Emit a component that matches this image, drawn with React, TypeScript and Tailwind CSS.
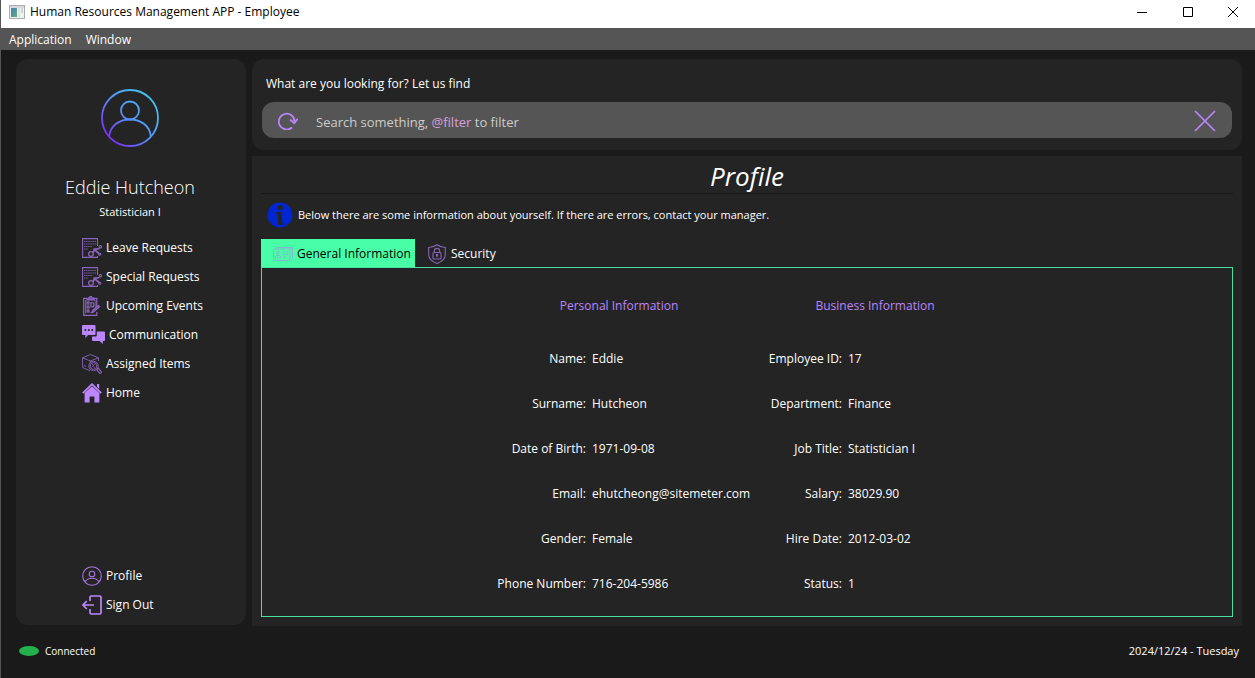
import React, { useState } from "react";

type IconProps = { className?: string };

function AppIcon() {
  return (
    <svg viewBox="0 0 16 14" className="h-3.5 w-4" aria-hidden="true">
      <defs>
        <linearGradient id="win" x1="0" y1="0" x2="1" y2="1">
          <stop offset="0" stopColor="#4a7fb0" />
          <stop offset="1" stopColor="#5fae7c" />
        </linearGradient>
      </defs>
      <rect x="0.5" y="0.5" width="15" height="13" fill="#f1f1f1" stroke="#a9adb2" />
      <rect x="1" y="1" width="14" height="2" fill="#d5d8dc" />
      <rect x="2" y="3" width="6" height="9" fill="url(#win)" />
      <rect x="9" y="3" width="2" height="9" fill="#dfe3e0" />
      <rect x="12" y="3" width="2" height="5" fill="#c9d8cf" />
    </svg>
  );
}

function Avatar() {
  return (
    <svg viewBox="0 0 58 58" className="size-[58px]" fill="none" stroke="url(#avatar)" strokeWidth="1.8" aria-hidden="true">
      <defs>
        <linearGradient id="avatar" gradientUnits="userSpaceOnUse" x1="8" y1="50" x2="50" y2="8">
          <stop offset="0" stopColor="#7b2ff7" />
          <stop offset="0.5" stopColor="#5495f8" />
          <stop offset="1" stopColor="#44c4f0" />
        </linearGradient>
      </defs>
      <circle cx="29" cy="29" r="28" />
      <circle cx="29" cy="21.5" r="9" />
      <path d="M8.200 47.500C9 37 18 30.500 29 30.500S49 37 49.800 47.500" />
    </svg>
  );
}

function RequestIcon({ className }: IconProps) {
  return (
    <svg viewBox="0 0 20 20" className={className} fill="none" stroke="#8a63bb" strokeWidth="1.100" aria-hidden="true">
      <path d="M15.500 8V.6H.6v18.800h14.900V18" />
      <path d="M2 3.500h12M2 6h12M2 8.500h8M2 11h4" strokeDasharray="1.500 .6" strokeWidth=".8" />
      <circle cx="9" cy="16" r="2.300" strokeWidth="1.300" />
      <path d="M10.700 14.300l3-3.200 4-.6M11.500 10.500l6 5.500" strokeWidth="1.700" />
      <circle cx="18.300" cy="8.700" r="1.200" />
      <circle cx="17.800" cy="16.200" r="1" />
    </svg>
  );
}

function EventsIcon({ className }: IconProps) {
  return (
    <svg viewBox="0 0 20 20" className={className} fill="none" stroke="#8e65c1" strokeWidth="1.200" aria-hidden="true">
      <path d="M14.800 16V19.300H1.700V2.300h4M11 2.300h3.800V11" />
      <path d="M3.500 17.500V4.200h9.700V12" strokeWidth=".8" />
      <path d="M5.500 3.500l1-1.700h1L8 .7h1.500l.5 1.100h1l1 1.700z" fill="#6a4a90" />
      <rect x="5" y="6" width="2" height="2" />
      <rect x="5" y="10" width="2" height="2" />
      <rect x="5" y="14" width="2" height="2" />
      <path d="M9 6.500h1c2.500 0 2.500 4.500 0 4.500H9zM8.500 16.500h3" />
      <path d="M10.500 14.500l6-5 1.200 1.300-6 5-1.700.5z" fill="#6a4a90" />
    </svg>
  );
}

function ChatIcon({ className }: IconProps) {
  return (
    <svg viewBox="0 0 23 19" className={className} fill="#bb86fc" aria-hidden="true">
      <path d="M1 0h11.500a1 1 0 0 1 1 1v8a1 1 0 0 1-1 1H6l-2.700 3v-3H1a1 1 0 0 1-1-1V1a1 1 0 0 1 1-1z" />
      <path d="M14.800 6.500H22a1 1 0 0 1 1 1V15a1 1 0 0 1-1 1h-1.200v3l-3.300-3H11a1 1 0 0 1-1-1v-3.500h3.800a1 1 0 0 0 1-1z" />
      <g fill="#242424">
        <circle cx="3.400" cy="5" r="1" />
        <circle cx="6.800" cy="5" r="1" />
        <circle cx="10.200" cy="5" r="1" />
      </g>
    </svg>
  );
}

function ItemsIcon({ className }: IconProps) {
  return (
    <svg viewBox="0 0 20 20" className={className} fill="none" stroke="#8a63bb" strokeWidth=".9" aria-hidden="true">
      <path d="M8 16.800L.6 13.500V3.800L8.500.5l8 3.300V7M.6 3.800L8.300 7l8.200-3.200M8.300 7v2M2 11.500l2 .9" />
      <circle cx="11.500" cy="12" r="4.700" />
      <circle cx="11.500" cy="12" r="3.400" />
      <path d="M10 9.500l3 5M13.500 9.500l-4 4" strokeWidth=".7" />
      <path d="M15 15.200l1.200-1.100 3.400 4-1.500 1.500-3.400-3.700" strokeWidth="1.200" />
    </svg>
  );
}

function HomeIcon({ className }: IconProps) {
  return (
    <svg viewBox="0 0 20 20" className={className} aria-hidden="true">
      <path d="M10 3.300l7.400 6.800v9.400h-5v-6H7.600v6h-5v-9.400z" fill="#bb86fc" />
      <path d="M15 1h2.200v5L15 4z" fill="#bb86fc" />
      <path d="M.8 10.200L10 1.200l9.200 9" fill="none" stroke="#bb86fc" strokeWidth="1.800" />
    </svg>
  );
}

function ProfileIcon({ className }: IconProps) {
  return (
    <svg viewBox="0 0 20 20" className={className} fill="none" stroke="#a878e2" strokeWidth="1.100" aria-hidden="true">
      <circle cx="10" cy="10" r="9.300" />
      <circle cx="10" cy="8" r="2.800" />
      <path d="M3.200 15.700C4.500 13.200 7 12.200 10 12.200s5.500 1 6.800 3.500" />
    </svg>
  );
}

function SignOutIcon({ className }: IconProps) {
  return (
    <svg viewBox="0 0 20 20" className={className} fill="none" stroke="#bb86fc" strokeWidth="1.700" aria-hidden="true">
      <path d="M8 6V2.300c0-.8.500-1.300 1.300-1.300h8.400c.8 0 1.300.5 1.300 1.300v15.400c0 .8-.5 1.300-1.300 1.300H9.300c-.8 0-1.300-.5-1.300-1.300V14M12 10H1M4.800 6L1 10l3.800 4" />
    </svg>
  );
}

function ReloadIcon() {
  return (
    <svg viewBox="0 0 20 18" className="h-[18px] w-5" fill="none" stroke="#bb86fc" strokeWidth="1.800" aria-hidden="true">
      <path d="M14 15.500A7.900 7.900 0 1 1 16.600 9.500" />
      <path d="M12 7.500l4.300 3.600 3.400-4.300" />
    </svg>
  );
}

function InfoIcon() {
  return (
    <svg viewBox="0 0 26 26" className="size-[26px]" aria-hidden="true">
      <circle cx="13" cy="13" r="12.500" fill="#0026d2" />
      <circle cx="13.300" cy="5.500" r="2.500" fill="#242424" />
      <path d="M9 10.300l6-.6v10.800c0 .8.600 1 1.500.8v1.200c-1.500.8-5.500 1.200-5.500-1.300V11.800L9 11.500z" fill="#242424" />
    </svg>
  );
}

function IdCardIcon() {
  return (
    <svg viewBox="0 0 20 14" className="h-3.5 w-5" fill="none" stroke="#80b8d0" strokeWidth="1" aria-hidden="true">
      <rect x=".5" y="2" width="16.500" height="11.500" rx="1" />
      <path d="M2 1.700L3 .5h16.500v10.800L18 12.500M17 2l2.500-1.500" />
      <circle cx="5" cy="5.600" r="1.400" />
      <path d="M2.500 11V9.500c0-1.600 5-1.600 5 0V11zM9.500 5h3M13.500 5h2M9.500 7.500h5.500M9.500 10h4" />
    </svg>
  );
}

function ShieldIcon() {
  return (
    <svg viewBox="0 0 18 20" className="h-5 w-[18px]" fill="none" stroke="#8a63bb" strokeWidth="1.100" aria-hidden="true">
      <path d="M9 .7c2.500 2 5 2.600 8.300 2.800v7c0 4.500-4 7.500-8.300 8.900C4.700 18 .7 15 .7 10.500v-7C4 3.300 6.500 2.700 9 .7z" />
      <rect x="5" y="8.500" width="8" height="6.500" rx="1" />
      <path d="M6.300 8.500V7c0-3.500 5.400-3.500 5.400 0v1.500M9 11v2.200" />
      <circle cx="9" cy="11" r=".7" />
    </svg>
  );
}

const navItems = [
  { label: "Leave Requests", icon: <RequestIcon className="size-5" /> },
  { label: "Special Requests", icon: <RequestIcon className="size-5" /> },
  { label: "Upcoming Events", icon: <EventsIcon className="size-5" /> },
  { label: "Communication", icon: <ChatIcon className="h-[19px] w-[23px]" /> },
  { label: "Assigned Items", icon: <ItemsIcon className="size-5" /> },
  { label: "Home", icon: <HomeIcon className="size-5" /> },
];

const accountItems = [
  { label: "Profile", icon: <ProfileIcon className="size-5" /> },
  { label: "Sign Out", icon: <SignOutIcon className="size-5" /> },
];

const personal: [string, string][] = [
  ["Name:", "Eddie"],
  ["Surname:", "Hutcheon"],
  ["Date of Birth:", "1971-09-08"],
  ["Email:", "ehutcheong@sitemeter.com"],
  ["Gender:", "Female"],
  ["Phone Number:", "716-204-5986"],
];

const business: [string, string][] = [
  ["Employee ID:", "17"],
  ["Department:", "Finance"],
  ["Job Title:", "Statistician I"],
  ["Salary:", "38029.90"],
  ["Hire Date:", "2012-03-02"],
  ["Status:", "1"],
];

function NavList({ items }: { items: { label: string; icon: React.ReactNode }[] }) {
  return (
    <ul className="flex flex-col pl-[66px]">
      {items.map((item) => (
        <li key={item.label}>
          <button type="button" className="flex h-[29px] items-center gap-1 whitespace-nowrap">
            {item.icon}
            {item.label}
          </button>
        </li>
      ))}
    </ul>
  );
}

function InfoTable({ title, rows }: { title: string; rows: [string, string][] }) {
  return (
    <table className="w-[252px] table-fixed border-collapse">
      <caption className="h-[60px] pt-[22px] text-[#bb86fc]">{title}</caption>
      <tbody>
        {rows.map(([label, value]) => (
          <tr key={label} className="h-[45px]">
            <th scope="row" className="w-[93px] p-0 text-right font-normal whitespace-nowrap">
              {label}
            </th>
            <td className="p-0 pl-1.5 whitespace-nowrap">{value}</td>
          </tr>
        ))}
      </tbody>
    </table>
  );
}

export default function App() {
  const [query, setQuery] = useState("");
  const [tab, setTab] = useState("general");

  return (
    <div className="flex min-h-screen flex-col border-l border-[#555555] bg-[#1a1a1a] font-['Open_Sans','Noto_Sans',sans-serif] text-[12px] leading-4 text-white">
      <header className="flex h-7 items-center bg-white pl-2 text-black">
        <div className="flex flex-1 items-center gap-[5px] pb-1">
          <AppIcon />
          <h1>Human Resources Management APP - Employee</h1>
        </div>
        <div className="flex h-full pb-1">
          <button type="button" aria-label="Minimize" className="flex w-[46px] items-center justify-center">
            <svg viewBox="0 0 10 10" className="size-2.5" stroke="#000"><path d="M0 5.500h10" /></svg>
          </button>
          <button type="button" aria-label="Maximize" className="flex w-[46px] items-center justify-center">
            <svg viewBox="0 0 10 10" className="size-2.5" stroke="#000" fill="none"><path d="M.5.5h9v9h-9z" /></svg>
          </button>
          <button type="button" aria-label="Close" className="flex w-[44px] items-center justify-center">
            <svg viewBox="0 0 10 10" className="size-2.5" stroke="#000"><path d="M0 0l10 10M10 0L0 10" /></svg>
          </button>
        </div>
      </header>

      <nav className="flex h-[22px] items-center gap-3.5 bg-[#555555] px-2 pt-0.5">
        <button type="button">Application</button>
        <button type="button">Window</button>
      </nav>

      <div className="flex flex-1 gap-1.5 pt-[9px] pr-[13px] pl-[15px]">
        <aside className="mb-px flex w-[230px] shrink-0 flex-col rounded-xl bg-[#242424] pt-[30px] pb-1.5">
          <div className="flex flex-col items-center pr-0.5">
            <Avatar />
            <h2 className="mt-[26px] text-[18px] leading-7 font-light">Eddie Hutcheon</h2>
            <p className="mt-[3px] text-[11px]">Statistician I</p>
          </div>
          <div className="mt-[13px] flex flex-1 flex-col justify-between">
            <NavList items={navItems} />
            <NavList items={accountItems} />
          </div>
        </aside>

        <div className="flex min-w-0 flex-1 flex-col gap-1.5">
          <section className="rounded-xl bg-[#242424] px-2.5 pt-[17px] pb-3">
            <label htmlFor="search" className="block px-1 pb-2.5">What are you looking for? Let us find</label>
            <div className="flex h-9 items-center rounded-xl bg-[#555555] px-4 pt-0.5">
              <button type="button" aria-label="Reload"><ReloadIcon /></button>
              <div className="relative ml-[18px] flex-1 pt-0.5 text-[13px] leading-5">
                <input
                  id="search"
                  type="text"
                  value={query}
                  onChange={(e) => setQuery(e.target.value)}
                  className="block w-full bg-transparent text-white outline-none"
                />
                {query === "" && (
                  <span className="pointer-events-none absolute top-0.5 left-0 whitespace-nowrap text-[#cccccc]">
                    Search something, <span className="text-[#d9a0dc]">@filter</span> to filter
                  </span>
                )}
              </div>
              <button type="button" aria-label="Clear search">
                <svg viewBox="0 0 22 22" className="size-[22px]" stroke="#bb86fc" strokeWidth="1.700" aria-hidden="true">
                  <path d="M1 1l20 20M21 1L1 21" />
                </svg>
              </button>
            </div>
          </section>

          <main className="flex flex-1 flex-col bg-[#242424] px-[9px] pb-[9px]">
            <h2 className="h-[38px] border-b border-[#171717] text-center font-['Ink_Free','Segoe_Print','Open_Sans',sans-serif] text-[26px] leading-[40px] italic">
              Profile
            </h2>
            <p className="flex h-[45px] items-center gap-[5px] pb-[3px] pl-1.5 text-[11px]">
              <InfoIcon />
              Below there are some information about yourself. If there are errors, contact your manager.
            </p>
            <div role="tablist" className="flex h-7">
              <button
                type="button"
                role="tab"
                aria-selected={tab === "general"}
                onClick={() => setTab("general")}
                className="flex w-[154px] items-center gap-1 bg-[#48ffa7] pt-px pl-3 whitespace-nowrap text-black"
              >
                <IdCardIcon />
                General Information
              </button>
              <button
                type="button"
                role="tab"
                aria-selected={tab === "security"}
                onClick={() => setTab("security")}
                className="flex items-center gap-[5px] px-[13px] pt-0.5"
              >
                <ShieldIcon />
                Security
              </button>
            </div>
            <div role="tabpanel" className="flex flex-1 justify-center gap-1 border border-[#48e0a0] pt-2">
              <div><InfoTable title="Personal Information" rows={personal} /></div>
              <div><InfoTable title="Business Information" rows={business} /></div>
            </div>
          </main>
        </div>
      </div>

      <footer className="flex h-[52px] items-center justify-between pr-4 pb-0.5 pl-[18px] text-[11px]">
        <span className="flex items-center gap-1.5 text-[10px]">
          <span className="h-2.5 w-5 rounded-[50%] bg-[#22b14c]" />
          Connected
        </span>
        <time dateTime="2024-12-24">2024/12/24 - Tuesday</time>
      </footer>
    </div>
  );
}
